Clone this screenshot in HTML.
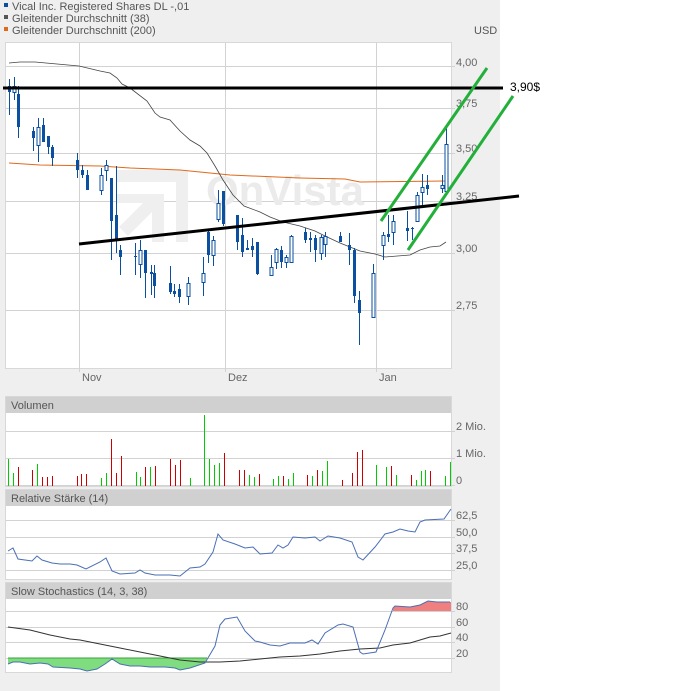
<!DOCTYPE html>
<html><head><meta charset="utf-8"><style>
html,body{margin:0;padding:0;background:#fff;}
svg{display:block;font-family:"Liberation Sans",sans-serif;}
</style></head><body>
<svg width="679" height="691" viewBox="0 0 679 691" xmlns="http://www.w3.org/2000/svg">
<rect x="0" y="0" width="500" height="691" fill="#efefef"/>
<rect x="4" y="3" width="4" height="4" fill="#0a4fa0"/><text x="12" y="10" font-size="11" fill="#555">Vical Inc. Registered Shares DL -,01</text>
<rect x="4" y="15" width="4" height="4" fill="#555"/><text x="12" y="22" font-size="11" fill="#555">Gleitender Durchschnitt (38)</text>
<rect x="4" y="27" width="4" height="4" fill="#e06a1a"/><text x="12" y="34" font-size="11" fill="#555">Gleitender Durchschnitt (200)</text>
<text x="474" y="34" font-size="11" fill="#555">USD</text>
<rect x="5" y="42" width="447" height="327" fill="#d8d8d8"/>
<rect x="6" y="43" width="445" height="325" fill="#fff"/>
<g stroke="#d2d2d2" stroke-width="1">
<line x1="6" y1="66.5" x2="455" y2="66.5"/><line x1="6" y1="108.5" x2="455" y2="108.5"/><line x1="6" y1="153.5" x2="455" y2="153.5"/><line x1="6" y1="201.5" x2="455" y2="201.5"/><line x1="6" y1="253.5" x2="455" y2="253.5"/><line x1="6" y1="310.5" x2="455" y2="310.5"/>
<line x1="79.5" y1="43" x2="79.5" y2="372"/><line x1="225.5" y1="43" x2="225.5" y2="372"/><line x1="376.5" y1="43" x2="376.5" y2="372"/>
</g>
<g font-size="11" fill="#666">
<text x="456" y="66">4,00</text><text x="456" y="107">3,75</text><text x="456" y="152">3,50</text><text x="456" y="200">3,25</text><text x="456" y="252">3,00</text><text x="456" y="309">2,75</text>
<text x="82" y="381">Nov</text><text x="228" y="381">Dez</text><text x="379" y="381">Jan</text>
</g>
<path d="M116 170 h72 v72 h-12 v-60 h-60z M116 194 h48 v48 h-12 v-30 l-24 24 -9 -9 24 -24 h-27z" fill="#efefef"/>
<text x="206" y="205" font-size="42" font-weight="bold" fill="#ebebeb">OnVista</text>
<polyline fill="none" stroke="#e06a1a" stroke-width="1" points="9,163 40,165 100,166 130,168 180,170 230,175 300,178 345,179 360,182 446,181"/>
<polyline fill="none" stroke="#444" stroke-width="0.8" points="9,63 20,62 35,62 79,66 100,71 110,73 117,78 122,84 130,88 147,101 155,113 160,117 170,120 180,131 190,140 200,146 207,153 215,166 223,180 233,195 244,206 260,212 270,217 283,222 300,226 315,231 325,236 340,243 360,251 375,254 385,257 410,255 420,250 430,247 440,246 446,242"/>
<g stroke="#0a4fa0" stroke-width="1">
<line x1="9.5" y1="79" x2="9.5" y2="115"/><line x1="14.5" y1="77" x2="14.5" y2="100"/><line x1="18.5" y1="86" x2="18.5" y2="138"/><line x1="33.5" y1="127" x2="33.5" y2="151"/><line x1="38.5" y1="118" x2="38.5" y2="162"/><line x1="43.5" y1="118" x2="43.5" y2="142"/><line x1="48.5" y1="136" x2="48.5" y2="154"/><line x1="52.5" y1="145" x2="52.5" y2="166"/>
<line x1="77.5" y1="153" x2="77.5" y2="178"/><line x1="82.5" y1="165" x2="82.5" y2="178"/><line x1="87.5" y1="170" x2="87.5" y2="190"/><line x1="101.5" y1="168" x2="101.5" y2="195"/><line x1="106.5" y1="160" x2="106.5" y2="181"/><line x1="111.5" y1="178" x2="111.5" y2="260"/><line x1="116.5" y1="166" x2="116.5" y2="253"/><line x1="120.5" y1="245" x2="120.5" y2="275"/>
<line x1="135.5" y1="243" x2="135.5" y2="275"/><line x1="140.5" y1="240" x2="140.5" y2="278"/><line x1="145.5" y1="250" x2="145.5" y2="298"/><line x1="151.5" y1="265" x2="151.5" y2="295"/><line x1="154.5" y1="265" x2="154.5" y2="298"/><line x1="170.5" y1="266" x2="170.5" y2="294"/><line x1="174.5" y1="284" x2="174.5" y2="297"/><line x1="179.5" y1="284" x2="179.5" y2="303"/><line x1="188.5" y1="277" x2="188.5" y2="305"/>
<line x1="203.5" y1="257" x2="203.5" y2="296"/><line x1="208.5" y1="230" x2="208.5" y2="263"/><line x1="213.5" y1="236" x2="213.5" y2="266"/><line x1="218.5" y1="190" x2="218.5" y2="222"/><line x1="223.5" y1="191" x2="223.5" y2="226"/>
<line x1="237.5" y1="215" x2="237.5" y2="250"/><line x1="242.5" y1="218" x2="242.5" y2="257"/><line x1="247.5" y1="240" x2="247.5" y2="250"/><line x1="252.5" y1="238" x2="252.5" y2="257"/><line x1="257.5" y1="242" x2="257.5" y2="275"/>
<line x1="271.5" y1="255" x2="271.5" y2="275"/><line x1="276.5" y1="248" x2="276.5" y2="269"/><line x1="281.5" y1="246" x2="281.5" y2="268"/><line x1="286.5" y1="255" x2="286.5" y2="268"/><line x1="291.5" y1="235" x2="291.5" y2="262"/>
<line x1="305.5" y1="228" x2="305.5" y2="243"/><line x1="310.5" y1="232" x2="310.5" y2="252"/><line x1="315.5" y1="235" x2="315.5" y2="262"/><line x1="321.5" y1="235" x2="321.5" y2="260"/><line x1="325.5" y1="232" x2="325.5" y2="257"/>
<line x1="340.5" y1="232" x2="340.5" y2="241"/><line x1="349.5" y1="233" x2="349.5" y2="265"/><line x1="354.5" y1="248" x2="354.5" y2="303"/><line x1="359.5" y1="291" x2="359.5" y2="345"/><line x1="373.5" y1="264" x2="373.5" y2="318"/>
<line x1="383.5" y1="232" x2="383.5" y2="260"/><line x1="388.5" y1="215" x2="388.5" y2="242"/><line x1="393.5" y1="215" x2="393.5" y2="245"/><line x1="407.5" y1="211" x2="407.5" y2="241"/><line x1="412.5" y1="227" x2="412.5" y2="240"/><line x1="417.5" y1="192" x2="417.5" y2="221"/><line x1="422.5" y1="174" x2="422.5" y2="206"/><line x1="427.5" y1="175" x2="427.5" y2="195"/><line x1="442.5" y1="175" x2="442.5" y2="193"/><line x1="446.5" y1="128" x2="446.5" y2="191"/>
</g>
<g fill="#0a4fa0">
<rect x="8" y="86" width="3" height="6"/><rect x="17" y="94" width="3" height="33"/><rect x="32" y="131" width="3" height="7"/><rect x="42" y="125" width="3" height="17"/><rect x="47" y="136" width="3" height="11"/><rect x="51" y="147" width="3" height="11"/>
<rect x="76" y="160" width="3" height="10"/><rect x="81" y="170" width="3" height="5"/><rect x="86" y="175" width="3" height="15"/><rect x="110" y="178" width="3" height="43"/><rect x="115" y="215" width="3" height="25"/><rect x="119" y="250" width="3" height="7"/>
<rect x="134" y="256" width="3" height="1"/><rect x="144" y="250" width="3" height="23"/><rect x="150" y="272" width="3" height="2"/><rect x="153" y="273" width="3" height="13"/><rect x="169" y="283" width="3" height="9"/><rect x="173" y="291" width="3" height="3"/><rect x="178" y="289" width="3" height="8"/>
<rect x="207" y="232" width="3" height="23"/><rect x="222" y="191" width="3" height="33"/><rect x="236" y="215" width="3" height="27"/><rect x="241" y="235" width="3" height="17"/><rect x="246" y="248" width="3" height="2"/><rect x="251" y="246" width="3" height="4"/><rect x="256" y="242" width="3" height="32"/>
<rect x="280" y="250" width="3" height="12"/><rect x="304" y="232" width="3" height="8"/><rect x="309" y="238" width="3" height="2"/><rect x="314" y="238" width="3" height="12"/><rect x="339" y="236" width="3" height="6"/><rect x="348" y="245" width="3" height="5"/><rect x="353" y="250" width="3" height="46"/><rect x="358" y="300" width="3" height="13"/>
<rect x="387" y="234" width="3" height="3"/><rect x="406" y="228" width="3" height="3"/><rect x="411" y="228" width="3" height="1"/><rect x="426" y="185" width="3" height="4"/>
</g>
<g fill="#fff" stroke="#0a4fa0" stroke-width="1">
<rect x="13" y="86.5" width="3" height="6"/><rect x="37" y="127.5" width="3" height="18"/><rect x="100" y="175.5" width="3" height="15"/><rect x="105" y="165.5" width="3" height="5"/><rect x="139" y="250.5" width="3" height="14"/><rect x="187" y="283.5" width="3" height="13"/>
<rect x="202" y="273.5" width="3" height="9"/><rect x="212" y="240.5" width="3" height="15"/><rect x="217" y="203.5" width="3" height="16"/><rect x="270" y="267.5" width="3" height="8"/><rect x="275" y="249.5" width="3" height="13"/><rect x="285" y="257.5" width="3" height="5"/><rect x="290" y="236.5" width="3" height="26"/>
<rect x="320" y="237.5" width="3" height="16"/><rect x="324" y="236.5" width="3" height="8"/><rect x="372" y="273.5" width="3" height="44"/><rect x="382" y="235.5" width="3" height="10"/><rect x="392" y="221.5" width="3" height="11"/><rect x="416" y="195.5" width="3" height="26"/><rect x="421" y="187.5" width="3" height="5"/><rect x="441" y="185.5" width="3" height="3"/><rect x="445" y="144.5" width="3" height="47"/>
</g>
<line x1="3" y1="88" x2="503" y2="88" stroke="#000" stroke-width="3"/>
<line x1="79" y1="244" x2="519" y2="196" stroke="#000" stroke-width="3"/>
<line x1="381" y1="221" x2="487" y2="68" stroke="#22b03a" stroke-width="3"/>
<line x1="408" y1="250" x2="513" y2="96" stroke="#22b03a" stroke-width="3"/>
<text x="510" y="91" font-size="12" fill="#000">3,90$</text>
<rect x="5" y="396" width="447" height="91" fill="#d8d8d8"/>
<rect x="6" y="397" width="445" height="16" fill="#d0d0d0"/>
<rect x="6" y="413" width="445" height="73" fill="#fff"/>
<text x="11" y="409" font-size="11" fill="#555">Volumen</text>
<g stroke="#d2d2d2"><line x1="6" y1="431.5" x2="455" y2="431.5"/><line x1="6" y1="458.5" x2="455" y2="458.5"/><line x1="6" y1="485.5" x2="455" y2="485.5"/></g>
<g font-size="11" fill="#666"><text x="456" y="430">2 Mio.</text><text x="456" y="457">1 Mio.</text><text x="456" y="484">0</text></g>
<g stroke="#0c0" stroke-width="1">
<line x1="8.5" y1="459" x2="8.5" y2="486"/><line x1="13.5" y1="473" x2="13.5" y2="486"/><line x1="37.5" y1="464" x2="37.5" y2="486"/><line x1="101.5" y1="478" x2="101.5" y2="486"/><line x1="106.5" y1="473" x2="106.5" y2="486"/><line x1="136.5" y1="472" x2="136.5" y2="486"/><line x1="140.5" y1="477" x2="140.5" y2="486"/><line x1="150.5" y1="467" x2="150.5" y2="486"/><line x1="190.5" y1="478" x2="190.5" y2="486"/><line x1="204.5" y1="415" x2="204.5" y2="486"/><line x1="209.5" y1="459" x2="209.5" y2="486"/><line x1="214.5" y1="465" x2="214.5" y2="486"/><line x1="219.5" y1="463" x2="219.5" y2="486"/><line x1="249.5" y1="475" x2="249.5" y2="486"/><line x1="254.5" y1="477" x2="254.5" y2="486"/><line x1="273.5" y1="479" x2="273.5" y2="486"/><line x1="278.5" y1="476" x2="278.5" y2="486"/><line x1="288.5" y1="479" x2="288.5" y2="486"/><line x1="293.5" y1="473" x2="293.5" y2="486"/><line x1="312.5" y1="476" x2="312.5" y2="486"/><line x1="322.5" y1="471" x2="322.5" y2="486"/><line x1="327.5" y1="461" x2="327.5" y2="486"/><line x1="376.5" y1="465" x2="376.5" y2="486"/><line x1="386.5" y1="467" x2="386.5" y2="486"/><line x1="396.5" y1="475" x2="396.5" y2="486"/><line x1="416.5" y1="480" x2="416.5" y2="486"/><line x1="421.5" y1="471" x2="421.5" y2="486"/><line x1="425.5" y1="470" x2="425.5" y2="486"/><line x1="445.5" y1="476" x2="445.5" y2="486"/><line x1="450.5" y1="462" x2="450.5" y2="486"/>
</g>
<g stroke="#c00" stroke-width="1">
<line x1="18.5" y1="467" x2="18.5" y2="486"/><line x1="32.5" y1="470" x2="32.5" y2="486"/><line x1="42.5" y1="477" x2="42.5" y2="486"/><line x1="47.5" y1="477" x2="47.5" y2="486"/><line x1="52.5" y1="476" x2="52.5" y2="486"/><line x1="77.5" y1="476" x2="77.5" y2="486"/><line x1="81.5" y1="474" x2="81.5" y2="486"/><line x1="86.5" y1="474" x2="86.5" y2="486"/><line x1="111.5" y1="439" x2="111.5" y2="486"/><line x1="116.5" y1="473" x2="116.5" y2="486"/><line x1="121.5" y1="456" x2="121.5" y2="486"/><line x1="145.5" y1="467" x2="145.5" y2="486"/><line x1="155.5" y1="466" x2="155.5" y2="486"/><line x1="170.5" y1="459" x2="170.5" y2="486"/><line x1="175.5" y1="465" x2="175.5" y2="486"/><line x1="180.5" y1="460" x2="180.5" y2="486"/><line x1="224.5" y1="453" x2="224.5" y2="486"/><line x1="239.5" y1="470" x2="239.5" y2="486"/><line x1="244.5" y1="470" x2="244.5" y2="486"/><line x1="259.5" y1="474" x2="259.5" y2="486"/><line x1="283.5" y1="476" x2="283.5" y2="486"/><line x1="307.5" y1="475" x2="307.5" y2="486"/><line x1="317.5" y1="470" x2="317.5" y2="486"/><line x1="342.5" y1="480" x2="342.5" y2="486"/><line x1="352.5" y1="473" x2="352.5" y2="486"/><line x1="357.5" y1="452" x2="357.5" y2="486"/><line x1="362.5" y1="450" x2="362.5" y2="486"/><line x1="391.5" y1="466" x2="391.5" y2="486"/><line x1="411.5" y1="475" x2="411.5" y2="486"/><line x1="430.5" y1="471" x2="430.5" y2="486"/>
</g>
<rect x="5" y="489" width="447" height="91" fill="#d8d8d8"/>
<rect x="6" y="490" width="445" height="16" fill="#d0d0d0"/>
<rect x="6" y="506" width="445" height="73" fill="#fff"/>
<text x="11" y="502" font-size="11" fill="#555">Relative Stärke (14)</text>
<g stroke="#d2d2d2"><line x1="6" y1="520.5" x2="455" y2="520.5"/><line x1="6" y1="537.5" x2="455" y2="537.5"/><line x1="6" y1="553.5" x2="455" y2="553.5"/><line x1="6" y1="570.5" x2="455" y2="570.5"/></g>
<g font-size="11" fill="#666"><text x="456" y="519">62,5</text><text x="456" y="536">50,0</text><text x="456" y="552">37,5</text><text x="456" y="569">25,0</text></g>
<polyline fill="none" stroke="#4a6fb5" stroke-width="1" points="8,551 13,548 18,559 25,560 32,561 37,556 42,560 52,563 60,564 70,564 77,565 86,569 100,562 106,558 112,571 120,574 135,573 140,570 145,573 155,575 170,575 180,576 190,568 200,567 205,564 213,552 218,534 223,540 235,544 245,548 253,547 260,554 272,553 278,545 283,548 288,545 293,537 305,538 315,537 320,541 328,536 340,538 352,542 358,557 363,560 375,547 385,534 393,532 400,529 408,531 415,532 420,522 425,520 444,519 451,509"/>
<rect x="5" y="582" width="447" height="91" fill="#d8d8d8"/>
<rect x="6" y="583" width="445" height="16" fill="#d0d0d0"/>
<rect x="6" y="599" width="445" height="73" fill="#fff"/>
<text x="11" y="595" font-size="11" fill="#555">Slow Stochastics (14, 3, 38)</text>
<g stroke="#d2d2d2"><line x1="6" y1="611.5" x2="455" y2="611.5"/><line x1="6" y1="627.5" x2="455" y2="627.5"/><line x1="6" y1="642.5" x2="455" y2="642.5"/><line x1="6" y1="658.5" x2="455" y2="658.5"/></g>
<g font-size="11" fill="#666"><text x="456" y="610">80</text><text x="456" y="626">60</text><text x="456" y="641">40</text><text x="456" y="657">20</text></g>
<polygon fill="#7fdc7f" points="8,658 8,664 13,662 20,662 30,664 40,663 48,664 53,667 70,668 80,669 87,671 97,669 105,664 112,659 120,664 130,666 140,666 150,667 165,667 175,668 180,670 190,668 205,663 207,658"/>
<line x1="8" y1="658" x2="207" y2="658" stroke="#3aa03a" stroke-width="1"/>
<polygon fill="#f08080" points="393,611 393,608 395,606 410,607 420,605 428,601 437,602 451,602 451,611"/>
<polyline fill="none" stroke="#333" stroke-width="1" points="8,627 30,630 50,635 70,639 80,640 100,644 120,648 140,652 160,656 175,659 180,660 200,662 220,662 240,661 260,659 280,657 300,656 320,654 340,651 360,649 380,648 393,645 410,643 430,637 440,636 451,633"/>
<polyline fill="none" stroke="#4a6fb5" stroke-width="1" points="8,664 13,662 20,662 30,664 40,663 48,664 53,667 70,668 80,669 87,671 97,669 105,664 112,659 120,664 130,666 140,666 150,667 165,667 175,668 180,670 190,668 205,663 215,646 220,625 225,619 237,617 245,631 255,641 260,642 270,645 280,646 290,643 305,643 312,640 318,644 325,633 338,625 343,624 353,627 360,652 363,654 376,652 385,630 393,608 395,606 410,607 420,605 428,601 437,602 450,602"/>
</svg>
</body></html>
